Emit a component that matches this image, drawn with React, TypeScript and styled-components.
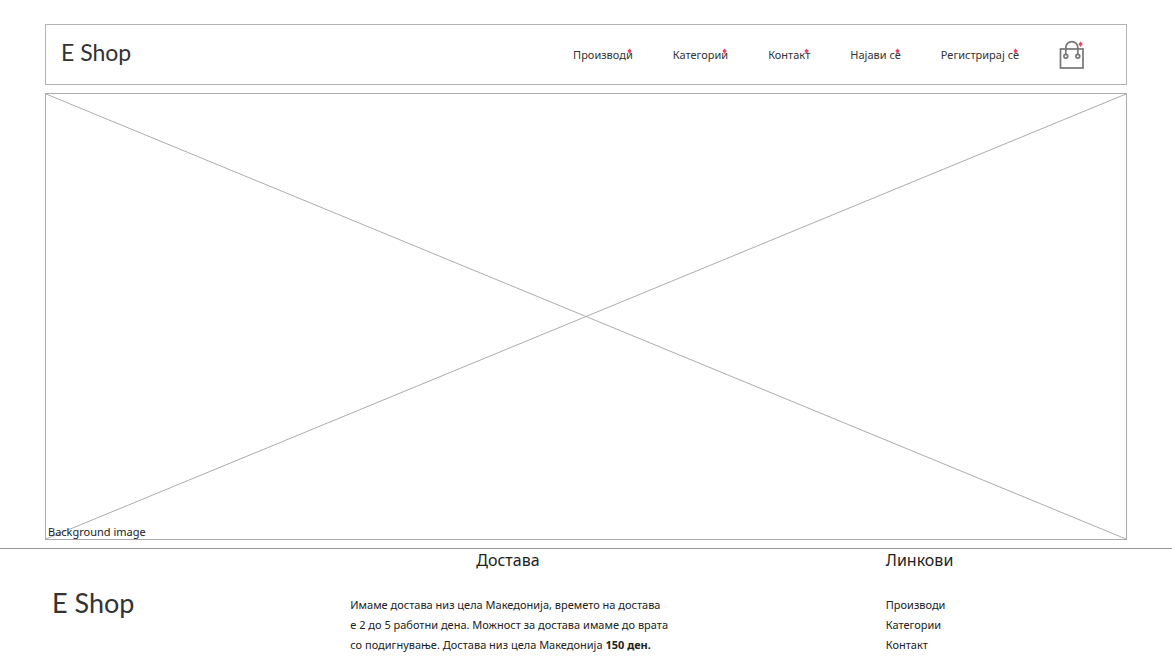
import React from "react";
import styled, { createGlobalStyle } from "styled-components";

const GlobalStyle = createGlobalStyle`
  *, *::before, *::after { box-sizing: border-box; }
  body {
    margin: 0;
    background: #fff;
    color: #222;
    font-family: "Noto Sans", "Open Sans", sans-serif;
    font-size: 11px;
  }
`;

const Page = styled.div`
  padding-top: 24px;
`;

const Header = styled.header`
  display: flex;
  align-items: center;
  justify-content: space-between;
  height: 61px;
  margin: 0 45px;
  padding: 0 42px 0 15px;
  border: 1px solid #b4b4b4;
`;

const Logo = styled.a<{ $large?: boolean }>`
  padding-bottom: ${(p) => (p.$large ? 0 : 6)}px;
  color: #333;
  font-family: Lato, sans-serif;
  font-size: ${(p) => (p.$large ? 27 : 23)}px;
  line-height: 32px;
  text-decoration: none;
  white-space: nowrap;
`;

const Nav = styled.nav`
  display: flex;
  align-items: center;
  gap: 40px;
`;

const NavLink = styled.a`
  position: relative;
  color: #333;
  line-height: 16px;
  text-decoration: none;
  white-space: nowrap;
`;

const BagButton = styled.button`
  position: relative;
  display: block;
  width: 25px;
  height: 30px;
  padding: 0;
  border: 0;
  background: none;
`;

const Marker = styled.svg`
  position: absolute;
  top: 1px;
  right: 1px;
  display: block;
`;

const Hero = styled.figure`
  position: relative;
  height: 447px;
  margin: 8px 45px;
  border: 1px solid #acacac;
`;

const Cross = styled.svg`
  display: block;
  width: 100%;
  height: 100%;
`;

const Caption = styled.figcaption`
  position: absolute;
  bottom: 0;
  left: 2px;
  line-height: 15px;
`;

const Footer = styled.footer`
  display: grid;
  grid-template-columns: 298fr 535fr 234fr;
  padding: 0 52px 4px;
  border-top: 1px solid #999;
`;

const Brand = styled.div`
  padding-top: 38px;
`;

const Heading = styled.h2<{ $indent?: boolean }>`
  margin: 0 0 24px;
  padding-left: ${(p) => (p.$indent ? 126 : 0)}px;
  font-size: 16px;
  font-weight: 400;
  line-height: 22px;
`;

const Copy = styled.p`
  margin: 0;
  line-height: 20px;
`;

const Links = styled.ul`
  margin: 0;
  padding: 0;
  list-style: none;
  line-height: 20px;
`;

const FooterLink = styled.a`
  color: inherit;
  text-decoration: none;
`;

const Pin = () => (
  <Marker width="5" height="7" viewBox="0 0 5 7" aria-hidden="true">
    <path d="M2.5 0.5 L4.8 3 L2.5 6 L0.4 3 Z" fill="#e8486c" />
  </Marker>
);

const navItems = ["Производи", "Категории", "Контакт", "Најави се", "Регистрирај се"];

export default function App() {
  return (
    <Page>
      <GlobalStyle />
      <Header>
        <Logo href="#">E Shop</Logo>
        <Nav>
          {navItems.map((label) => (
            <NavLink href="#" key={label}>
              {label}
              <Pin />
            </NavLink>
          ))}
          <BagButton type="button" aria-label="Кошничка">
            <svg width="25" height="30" viewBox="0 0 25 30" fill="none" stroke="#777" strokeWidth="1.7">
              <rect x="1.5" y="9" width="22.5" height="19" />
              <path d="M6.8 14.3V7.6a6 6 0 0 1 12 0V14.3" />
              <circle cx="6.8" cy="16.2" r="1.9" fill="#fff" />
              <circle cx="18.8" cy="16.2" r="1.9" fill="#fff" />
            </svg>
            <Pin />
          </BagButton>
        </Nav>
      </Header>
      <Hero>
        <Cross viewBox="0 0 100 100" preserveAspectRatio="none" stroke="#acacac" aria-hidden="true">
          <line x1="0" y1="0" x2="100" y2="100" vectorEffect="non-scaling-stroke" />
          <line x1="100" y1="0" x2="0" y2="100" vectorEffect="non-scaling-stroke" />
        </Cross>
        <Caption>Background image</Caption>
      </Hero>
      <Footer>
        <Brand>
          <Logo href="#" $large>E Shop</Logo>
        </Brand>
        <section>
          <Heading $indent>Достава</Heading>
          <Copy>
            Имаме достава низ цела Македонија, времето на достава
            <br />
            е 2 до 5 работни дена. Можност за достава имаме до врата
            <br />
            со подигнување. Достава низ цела Македонија <strong>150 ден.</strong>
          </Copy>
        </section>
        <section>
          <Heading>Линкови</Heading>
          <Links>
            {navItems.slice(0, 3).map((label) => (
              <li key={label}>
                <FooterLink href="#">{label}</FooterLink>
              </li>
            ))}
          </Links>
        </section>
      </Footer>
    </Page>
  );
}
